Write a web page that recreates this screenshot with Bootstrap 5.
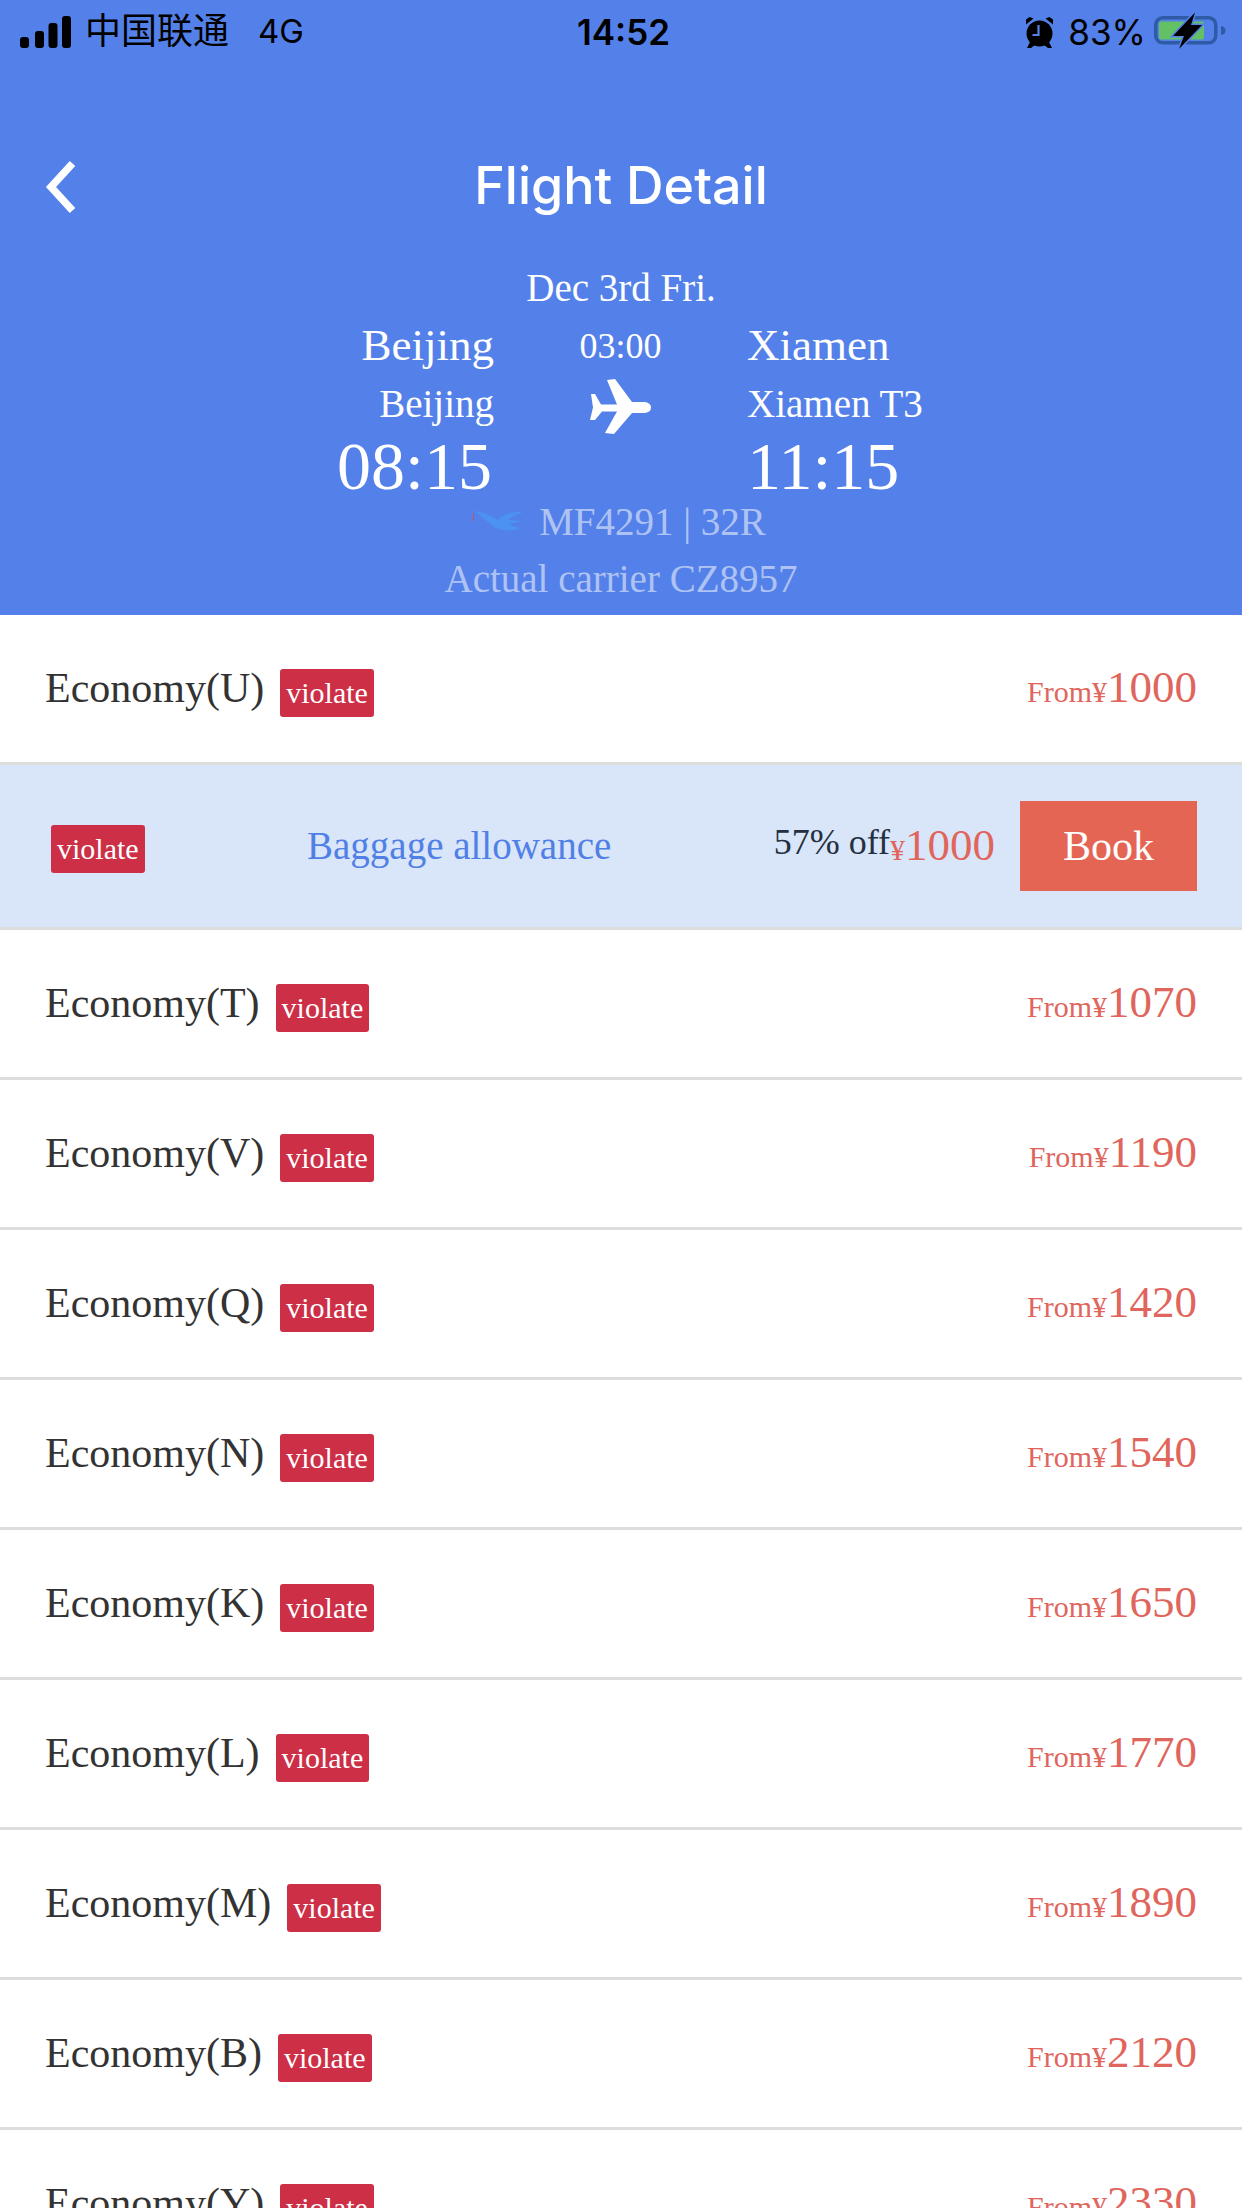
<!DOCTYPE html>
<html lang="en"><head><meta charset="utf-8"><title>Flight Detail</title>
<link href="https://cdn.jsdelivr.net/npm/bootstrap@5.3.0/dist/css/bootstrap.min.css" rel="stylesheet">
<style>
html,body{margin:0;height:2208px;overflow:hidden;background:#fff;font-family:"Liberation Serif","Times New Roman",serif}
.hero{background:#5481e9;height:615px;color:#fff}
.sbar{height:64px;padding:0 15px 0 20px;font-family:Inter,"Liberation Sans",Arial,sans-serif;color:#000;font-size:33px}
.sbar>div{flex:1 1 0}
.carrier{font-family:"Liberation Sans","Noto Sans CJK SC",sans-serif;font-size:36px;margin-left:14px;margin-right:29px}
.clock{font-weight:600;font-size:35px;text-align:center}
.alarm{margin-right:1px}
.pct{font-size:35px;margin:0 8px 0 14px}
.batt{margin-top:-3px}
.navrow{height:120px;padding:0 45px;margin-top:63px;margin-bottom:-63px}
.navtitle{font-family:Inter,"Liberation Sans",Arial,sans-serif;font-weight:500;font-size:52px;flex:1;text-align:center;padding-right:31px;line-height:1;margin-top:-2px}
.datex{font-size:39px;line-height:45px;text-align:center;margin-top:81px}
.route{height:168px;margin-top:5px}
.side-l{width:494px;text-align:right}
.side-m{width:253px;text-align:center}
.side-r{flex:1;text-align:left}
.city{font-size:45px;line-height:60px}
.term{font-size:39px;line-height:57px}
.hour{font-size:68px;line-height:68px}
.side-l .hour{padding-right:2px}
.dur{font-size:36px;line-height:50px;padding-top:6px;padding-bottom:7px}
.meta{color:rgba(255,255,255,.55);text-align:center;font-size:39px}
.meta1{line-height:56px;margin-top:11px;padding-right:5px}
.meta2{line-height:58px}
.birdmark{margin:0 14px 0 2px}
.fare{height:150px;border-bottom:3px solid #dcdedc;padding:0 45px;background:#fff}
.fname{font-size:42px;color:#333;line-height:50px;margin-top:-2px}
.vtag{display:inline-block;background:#cc2f46;color:#fff;font-size:30px;line-height:48px;height:48px;padding:0 6px;border-radius:3px;margin-top:9px}
.fprice{color:#e0655c;font-size:30px;line-height:50px;white-space:nowrap;margin-top:2px}
.num{font-size:45px}
.fare-open{height:165px;background:#d9e5f8;padding:0 45px 0 51px}
.fare-open .vtag{margin-top:6px}
.bag{color:#5080e6;font-size:39px}
.off{font-size:36px;color:#24303f;line-height:1;margin-top:-8px}
.bookbtn{width:177px;height:90px;background:#e56555;color:#fff;font-size:42px;border:0;border-radius:0;padding:0;line-height:1;margin-left:25px}
</style></head><body>
<header class="hero">
 <div class="sbar d-flex align-items-center">
  <div class="d-flex align-items-center">
   <svg width="51" height="32" viewBox="0 0 51 32" fill="#000"><rect x="0" y="21" width="9" height="11" rx="3"/><rect x="15" y="15" width="9" height="17" rx="3"/><rect x="28.5" y="7" width="9" height="25" rx="3"/><rect x="42" y="0" width="9" height="32" rx="3"/></svg>
   <span class="carrier">中国联通</span><span>4G</span>
  </div>
  <div class="clock">14:52</div>
  <div class="d-flex align-items-center justify-content-end">
   <svg class="alarm" width="27" height="31" viewBox="0 0 27 31"><g fill="#000"><circle cx="13.5" cy="16.5" r="13"/><path d="M0 7.500 7.500 1.500 3.500 0 0 2.500zM27 7.500 19.500 1.500 23.500 0 27 2.500zM4 25 1 31H5L9 28zM23 25 26 31H22L18 28z"/></g><path d="M12.500 8v10H6.500" fill="none" stroke="#5481e9" stroke-width="2.200"/></svg>
   <span class="pct">83%</span>
   <svg class="batt" width="73" height="40" viewBox="0 0 73 40"><rect x="1.750" y="6.750" width="60" height="25" rx="7" fill="none" stroke="#2f5aa6" stroke-width="3.500"/><rect x="5" y="10.500" width="45" height="18" rx="2" fill="#63c065"/><path d="M67 15c3 .5 4.500 2.200 4.500 4.500S70 23.500 67 24z" fill="#2f5aa6"/><path d="M41 1.500 19 25H30L25 38 48 14H37Z" fill="#000" stroke="#5481e9" stroke-width="3" paint-order="stroke"/></svg>
  </div>
 </div>
 <div class="navrow d-flex align-items-center">
  <svg width="31" height="54" viewBox="0 0 31 54"><path d="M27.500 3.500 6 27l21.500 23.500" fill="none" stroke="#fff" stroke-width="7.500"/></svg>
  <div class="navtitle">Flight Detail</div>
 </div>
 <div class="datex">Dec 3rd Fri.</div>
 <div class="route d-flex">
  <div class="side-l"><div class="city">Beijing</div><div class="term">Beijing</div><div class="hour">08:15</div></div>
  <div class="side-m"><div class="dur">03:00</div>
   <svg width="61" height="57" viewBox="0 0 61 57" fill="#fff"><path d="M17 2 25 1 42 24H55Q61 25 61 29.500 61 34 55 35H42L24 56 15 55 27 33.500H12L5 42H0L3 29.500 1 16H5L11 26.500H27Z"/></svg>
  </div>
  <div class="side-r"><div class="city">Xiamen</div><div class="term">Xiamen T3</div><div class="hour">11:15</div></div>
 </div>
 <div class="meta meta1 d-flex justify-content-center align-items-center">
  <svg width="52" height="22" viewBox="0 0 52 22" class="birdmark"><rect x="0" y="2" width="1" height="8" fill="#c0506a"/><path d="M2 0C10 1 20 5 25 9 30 4 38 0 50 1 44 4 38 6 35 9L50 10 36 13C39 15 43 16 48 17 38 21 26 20 20 15 14 10 7 5 2 0Z" fill="#4b92f2"/></svg>
  <span>MF4291 | 32R</span>
 </div>
 <div class="meta meta2">Actual carrier CZ8957</div>
</header>
<main>
 <div class="fare d-flex align-items-center justify-content-between"><div class="d-flex align-items-center gap-3"><span class="fname">Economy(U)</span><span class="vtag">violate</span></div><div class="fprice">From¥<span class="num">1000</span></div></div>
 <div class="fare fare-open d-flex align-items-center"><span class="vtag">violate</span><span class="bag flex-grow-1 text-center">Baggage allowance</span><span class="off">57% off</span><span class="fprice">¥<span class="num">1000</span></span><button class="btn bookbtn" type="button">Book</button></div>
 <div class="fare d-flex align-items-center justify-content-between"><div class="d-flex align-items-center gap-3"><span class="fname">Economy(T)</span><span class="vtag">violate</span></div><div class="fprice">From¥<span class="num">1070</span></div></div>
 <div class="fare d-flex align-items-center justify-content-between"><div class="d-flex align-items-center gap-3"><span class="fname">Economy(V)</span><span class="vtag">violate</span></div><div class="fprice">From¥<span class="num">1190</span></div></div>
 <div class="fare d-flex align-items-center justify-content-between"><div class="d-flex align-items-center gap-3"><span class="fname">Economy(Q)</span><span class="vtag">violate</span></div><div class="fprice">From¥<span class="num">1420</span></div></div>
 <div class="fare d-flex align-items-center justify-content-between"><div class="d-flex align-items-center gap-3"><span class="fname">Economy(N)</span><span class="vtag">violate</span></div><div class="fprice">From¥<span class="num">1540</span></div></div>
 <div class="fare d-flex align-items-center justify-content-between"><div class="d-flex align-items-center gap-3"><span class="fname">Economy(K)</span><span class="vtag">violate</span></div><div class="fprice">From¥<span class="num">1650</span></div></div>
 <div class="fare d-flex align-items-center justify-content-between"><div class="d-flex align-items-center gap-3"><span class="fname">Economy(L)</span><span class="vtag">violate</span></div><div class="fprice">From¥<span class="num">1770</span></div></div>
 <div class="fare d-flex align-items-center justify-content-between"><div class="d-flex align-items-center gap-3"><span class="fname">Economy(M)</span><span class="vtag">violate</span></div><div class="fprice">From¥<span class="num">1890</span></div></div>
 <div class="fare d-flex align-items-center justify-content-between"><div class="d-flex align-items-center gap-3"><span class="fname">Economy(B)</span><span class="vtag">violate</span></div><div class="fprice">From¥<span class="num">2120</span></div></div>
 <div class="fare d-flex align-items-center justify-content-between"><div class="d-flex align-items-center gap-3"><span class="fname">Economy(Y)</span><span class="vtag">violate</span></div><div class="fprice">From¥<span class="num">2330</span></div></div>
</main>
<script src="https://cdn.jsdelivr.net/npm/bootstrap@5.3.0/dist/js/bootstrap.bundle.min.js"></script>
</body></html>
